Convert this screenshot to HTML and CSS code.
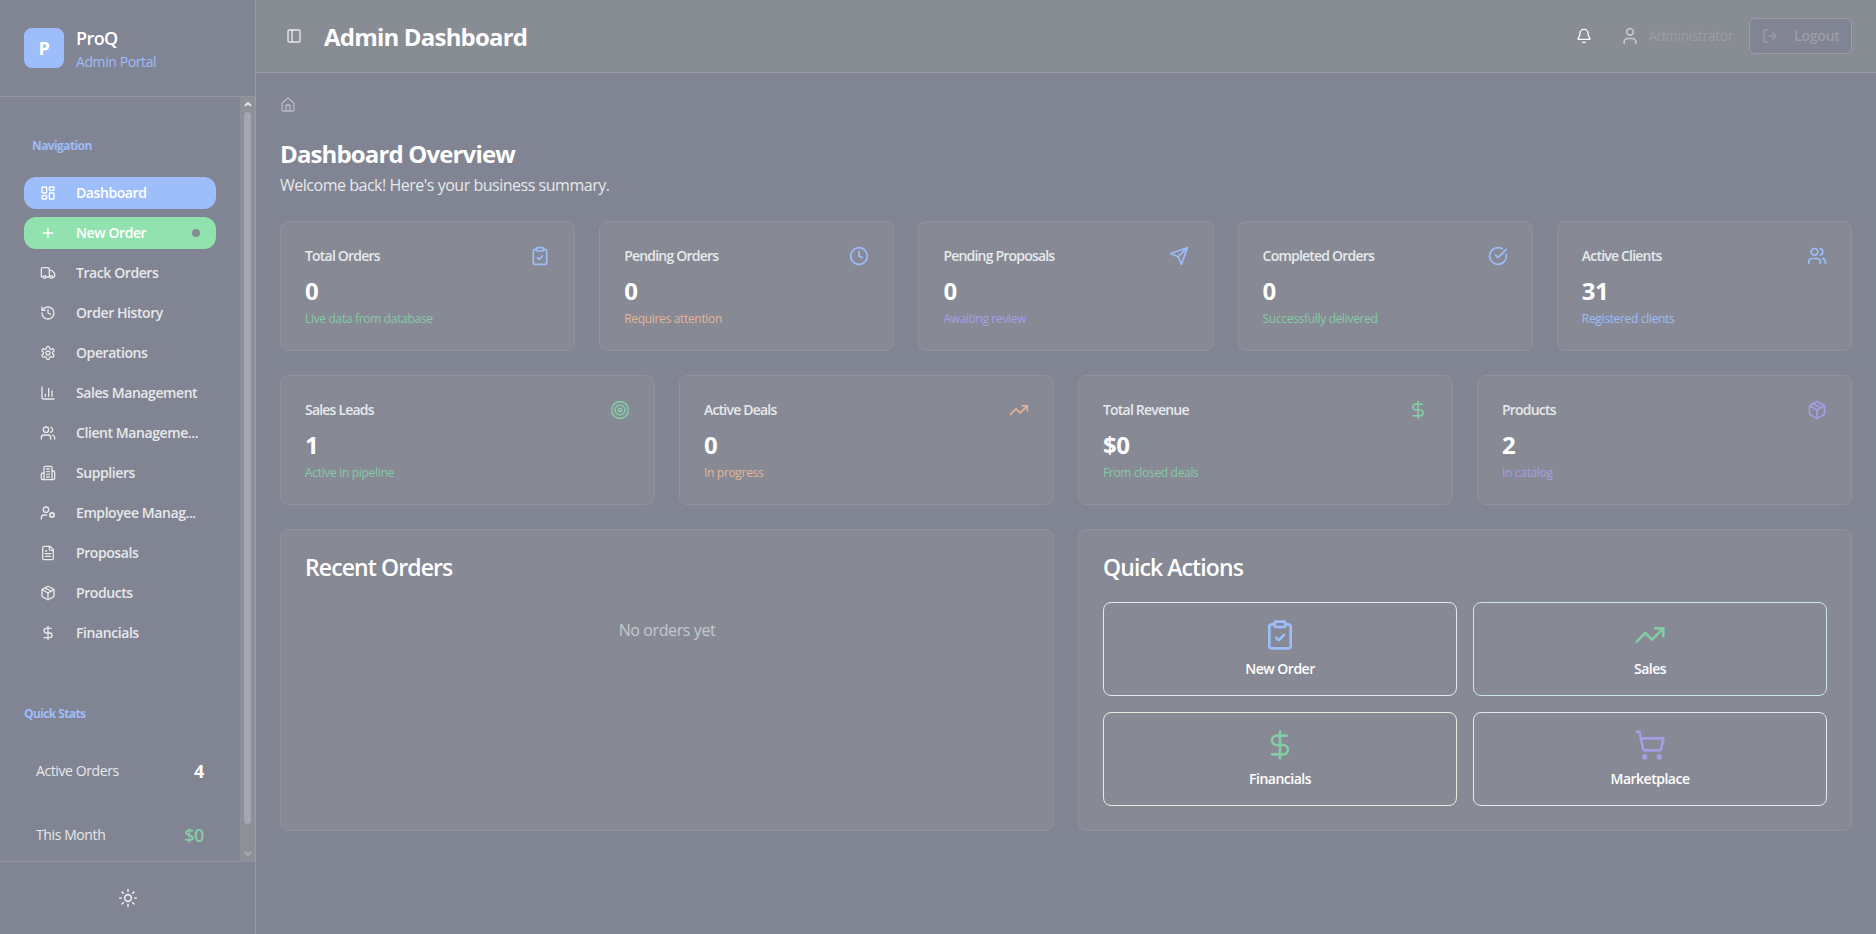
FILE: index.html
```html
<!DOCTYPE html>
<html lang="en">
<head>
  <meta charset="UTF-8">
  <meta name="viewport" content="width=device-width, initial-scale=1.0">
  <title>ProQ Admin Dashboard</title>
  <link rel="stylesheet" href="styles.css">
</head>
<body>
  <!-- shared icons -->
  <svg class="sprite" xmlns="http://www.w3.org/2000/svg">
    <symbol id="i-grid" viewBox="0 0 24 24"><rect x="3" y="3" width="7" height="9" rx="1"/><rect x="14" y="3" width="7" height="5" rx="1"/><rect x="14" y="12" width="7" height="9" rx="1"/><rect x="3" y="16" width="7" height="5" rx="1"/></symbol>
    <symbol id="i-plus" viewBox="0 0 24 24"><path d="M5 12h14M12 5v14"/></symbol>
    <symbol id="i-truck" viewBox="0 0 24 24"><path d="M14 18V6a2 2 0 0 0-2-2H4a2 2 0 0 0-2 2v11a1 1 0 0 0 1 1h2"/><path d="M15 18H9"/><path d="M19 18h2a1 1 0 0 0 1-1v-3.65a1 1 0 0 0-.22-.624l-3.48-4.35A1 1 0 0 0 17.52 8H14"/><circle cx="17" cy="18" r="2"/><circle cx="7" cy="18" r="2"/></symbol>
    <symbol id="i-history" viewBox="0 0 24 24"><path d="M3 12a9 9 0 1 0 9-9 9.75 9.75 0 0 0-6.74 2.74L3 8"/><path d="M3 3v5h5"/><path d="M12 7v5l4 2"/></symbol>
    <symbol id="i-settings" viewBox="0 0 24 24"><path d="M12.22 2h-.44a2 2 0 0 0-2 2v.18a2 2 0 0 1-1 1.73l-.43.25a2 2 0 0 1-2 0l-.15-.08a2 2 0 0 0-2.73.73l-.22.38a2 2 0 0 0 .73 2.73l.15.1a2 2 0 0 1 1 1.72v.51a2 2 0 0 1-1 1.74l-.15.09a2 2 0 0 0-.73 2.73l.22.38a2 2 0 0 0 2.73.73l.15-.08a2 2 0 0 1 2 0l.43.25a2 2 0 0 1 1 1.73V20a2 2 0 0 0 2 2h.44a2 2 0 0 0 2-2v-.18a2 2 0 0 1 1-1.73l.43-.25a2 2 0 0 1 2 0l.15.08a2 2 0 0 0 2.73-.73l.22-.39a2 2 0 0 0-.73-2.73l-.15-.08a2 2 0 0 1-1-1.74v-.5a2 2 0 0 1 1-1.74l.15-.09a2 2 0 0 0 .73-2.73l-.22-.38a2 2 0 0 0-2.73-.73l-.15.08a2 2 0 0 1-2 0l-.43-.25a2 2 0 0 1-1-1.73V4a2 2 0 0 0-2-2z"/><circle cx="12" cy="12" r="3"/></symbol>
    <symbol id="i-chart" viewBox="0 0 24 24"><path d="M3 3v16a2 2 0 0 0 2 2h16"/><path d="M18 17V9M13 17V5M8 17v-3"/></symbol>
    <symbol id="i-users" viewBox="0 0 24 24"><path d="M16 21v-2a4 4 0 0 0-4-4H6a4 4 0 0 0-4 4v2"/><circle cx="9" cy="7" r="4"/><path d="M22 21v-2a4 4 0 0 0-3-3.87"/><path d="M16 3.13a4 4 0 0 1 0 7.75"/></symbol>
    <symbol id="i-building" viewBox="0 0 24 24"><path d="M6 22V4a2 2 0 0 1 2-2h8a2 2 0 0 1 2 2v18Z"/><path d="M6 12H4a2 2 0 0 0-2 2v6a2 2 0 0 0 2 2h2"/><path d="M18 9h2a2 2 0 0 1 2 2v9a2 2 0 0 1-2 2h-2"/><path d="M10 6h4M10 10h4M10 14h4M10 18h4"/></symbol>
    <symbol id="i-usercog" viewBox="0 0 24 24"><path d="M10 15H6a4 4 0 0 0-4 4v2"/><circle cx="9" cy="7" r="4"/><circle cx="18" cy="15" r="3"/><path d="m14.305 16.53.923-.382M15.228 13.852l-.923-.383M16.852 12.228l-.383-.923M16.852 17.772l-.383.924M19.148 12.228l.383-.923M19.53 18.696l-.382-.924M20.772 13.852l.924-.383M20.772 16.148l.924.383"/></symbol>
    <symbol id="i-file" viewBox="0 0 24 24"><path d="M15 2H6a2 2 0 0 0-2 2v16a2 2 0 0 0 2 2h12a2 2 0 0 0 2-2V7Z"/><path d="M14 2v4a2 2 0 0 0 2 2h4"/><path d="M10 9H8M16 13H8M16 17H8"/></symbol>
    <symbol id="i-package" viewBox="0 0 24 24"><path d="M11 21.73a2 2 0 0 0 2 0l7-4A2 2 0 0 0 21 16V8a2 2 0 0 0-1-1.73l-7-4a2 2 0 0 0-2 0l-7 4A2 2 0 0 0 3 8v8a2 2 0 0 0 1 1.73z"/><path d="M12 22V12"/><path d="M3.3 7 12 12l8.7-5"/><path d="m7.5 4.27 9 5.15"/></symbol>
    <symbol id="i-dollar" viewBox="0 0 24 24"><path d="M12 2v20"/><path d="M17 5H9.500a3.500 3.500 0 0 0 0 7h5a3.500 3.500 0 0 1 0 7H6"/></symbol>
    <symbol id="i-sun" viewBox="0 0 24 24"><circle cx="12" cy="12" r="4"/><path d="M12 2v2M12 20v2M4.930 4.930l1.410 1.410M17.660 17.660l1.410 1.410M2 12h2M20 12h2M6.340 17.660l-1.410 1.410M19.070 4.930l-1.410 1.410"/></symbol>
    <symbol id="i-panel" viewBox="0 0 24 24"><rect x="3" y="3" width="18" height="18" rx="2"/><path d="M9 3v18"/></symbol>
    <symbol id="i-bell" viewBox="0 0 24 24"><path d="M10.268 21a2 2 0 0 0 3.464 0"/><path d="M3.262 15.326A1 1 0 0 0 4 17h16a1 1 0 0 0 .74-1.673C19.410 13.956 18 12.499 18 8A6 6 0 0 0 6 8c0 4.499-1.411 5.956-2.738 7.326"/></symbol>
    <symbol id="i-user" viewBox="0 0 24 24"><path d="M19 21v-2a4 4 0 0 0-4-4H9a4 4 0 0 0-4 4v2"/><circle cx="12" cy="7" r="4"/></symbol>
    <symbol id="i-logout" viewBox="0 0 24 24"><path d="m16 17 5-5-5-5M21 12H9M9 21H5a2 2 0 0 1-2-2V5a2 2 0 0 1 2-2h4"/></symbol>
    <symbol id="i-home" viewBox="0 0 24 24"><path d="M15 21v-8a1 1 0 0 0-1-1h-4a1 1 0 0 0-1 1v8"/><path d="M3 10a2 2 0 0 1 .709-1.528l7-6a2 2 0 0 1 2.582 0l7 6A2 2 0 0 1 21 10v9a2 2 0 0 1-2 2H5a2 2 0 0 1-2-2z"/></symbol>
    <symbol id="i-clipboard" viewBox="0 0 24 24"><rect x="8" y="2" width="8" height="4" rx="1"/><path d="M16 4h2a2 2 0 0 1 2 2v14a2 2 0 0 1-2 2H6a2 2 0 0 1-2-2V6a2 2 0 0 1 2-2h2"/><path d="m9 14 2 2 4-4"/></symbol>
    <symbol id="i-clock" viewBox="0 0 24 24"><circle cx="12" cy="12" r="10"/><path d="M12 6v6l4 2"/></symbol>
    <symbol id="i-send" viewBox="0 0 24 24"><path d="m22 2-7 20-4-9-9-4Z"/><path d="M22 2 11 13"/></symbol>
    <symbol id="i-check" viewBox="0 0 24 24"><path d="M21.801 10A10 10 0 1 1 17 3.335"/><path d="m9 11 3 3L22 4"/></symbol>
    <symbol id="i-target" viewBox="0 0 24 24"><circle cx="12" cy="12" r="10"/><circle cx="12" cy="12" r="6"/><circle cx="12" cy="12" r="2"/></symbol>
    <symbol id="i-trend" viewBox="0 0 24 24"><path d="m22 7-8.500 8.500-5-5L2 17"/><path d="M16 7h6v6"/></symbol>
    <symbol id="i-cart" viewBox="0 0 24 24"><circle cx="8" cy="21" r="1"/><circle cx="19" cy="21" r="1"/><path d="M2.050 2.050h2l2.660 12.420a2 2 0 0 0 2 1.580h9.780a2 2 0 0 0 1.950-1.570l1.650-7.430H5.120"/></symbol>
  </svg>

  <div class="layout">
    <aside class="sidebar">
      <div class="brand">
        <div class="logo">P</div>
        <div>
          <div class="brand-name">ProQ</div>
          <div class="brand-sub">Admin Portal</div>
        </div>
      </div>
      <div class="sidebar-body">
        <div class="sidebar-content">
          <div class="nav-label">Navigation</div>
          <nav class="nav">
            <a class="nav-item active"><svg class="icon"><use href="#i-grid"/></svg><span>Dashboard</span></a>
            <a class="nav-item new"><svg class="icon"><use href="#i-plus"/></svg><span>New Order</span><i class="dot"></i></a>
            <a class="nav-item"><svg class="icon"><use href="#i-truck"/></svg><span>Track Orders</span></a>
            <a class="nav-item"><svg class="icon"><use href="#i-history"/></svg><span>Order History</span></a>
            <a class="nav-item"><svg class="icon"><use href="#i-settings"/></svg><span>Operations</span></a>
            <a class="nav-item"><svg class="icon"><use href="#i-chart"/></svg><span>Sales Management</span></a>
            <a class="nav-item"><svg class="icon"><use href="#i-users"/></svg><span>Client Manageme...</span></a>
            <a class="nav-item"><svg class="icon"><use href="#i-building"/></svg><span>Suppliers</span></a>
            <a class="nav-item"><svg class="icon"><use href="#i-usercog"/></svg><span>Employee Manag...</span></a>
            <a class="nav-item"><svg class="icon"><use href="#i-file"/></svg><span>Proposals</span></a>
            <a class="nav-item"><svg class="icon"><use href="#i-package"/></svg><span>Products</span></a>
            <a class="nav-item"><svg class="icon"><use href="#i-dollar"/></svg><span>Financials</span></a>
          </nav>
          <div class="stats-label">Quick Stats</div>
          <div class="stat-row"><span>Active Orders</span><b>4</b></div>
          <div class="stat-row"><span>This Month</span><b class="money">$0</b></div>
        </div>
        <div class="scrollbar">
          <svg class="arrow" viewBox="0 0 8 6"><path d="M1 5l3-3 3 3"/></svg>
          <div class="thumb"></div>
          <svg class="arrow down" viewBox="0 0 8 6"><path d="M1 1l3 3 3-3"/></svg>
        </div>
      </div>
      <div class="sidebar-footer"><svg class="icon md"><use href="#i-sun"/></svg></div>
    </aside>

    <div class="main">
      <header class="topbar">
        <svg class="icon"><use href="#i-panel"/></svg>
        <h1>Admin Dashboard</h1>
        <div class="topbar-right">
          <svg class="icon bell"><use href="#i-bell"/></svg>
          <div class="account"><svg class="icon md"><use href="#i-user"/></svg><span>Administrator</span></div>
          <button class="logout"><svg class="icon"><use href="#i-logout"/></svg><span>Logout</span></button>
        </div>
      </header>

      <main class="content">
        <svg class="icon crumb"><use href="#i-home"/></svg>
        <h2>Dashboard Overview</h2>
        <p class="welcome">Welcome back! Here's your business summary.</p>

        <section class="cards five">
          <div class="card"><div class="card-head"><span>Total Orders</span><svg class="icon md blue"><use href="#i-clipboard"/></svg></div><div class="value">0</div><div class="note green">Live data from database</div></div>
          <div class="card"><div class="card-head"><span>Pending Orders</span><svg class="icon md blue"><use href="#i-clock"/></svg></div><div class="value">0</div><div class="note orange">Requires attention</div></div>
          <div class="card"><div class="card-head"><span>Pending Proposals</span><svg class="icon md blue"><use href="#i-send"/></svg></div><div class="value">0</div><div class="note purple">Awaiting review</div></div>
          <div class="card"><div class="card-head"><span>Completed Orders</span><svg class="icon md blue"><use href="#i-check"/></svg></div><div class="value">0</div><div class="note green">Successfully delivered</div></div>
          <div class="card"><div class="card-head"><span>Active Clients</span><svg class="icon md blue"><use href="#i-users"/></svg></div><div class="value">31</div><div class="note blue">Registered clients</div></div>
        </section>

        <section class="cards four">
          <div class="card"><div class="card-head"><span>Sales Leads</span><svg class="icon md green"><use href="#i-target"/></svg></div><div class="value">1</div><div class="note green">Active in pipeline</div></div>
          <div class="card"><div class="card-head"><span>Active Deals</span><svg class="icon md orange"><use href="#i-trend"/></svg></div><div class="value">0</div><div class="note orange">In progress</div></div>
          <div class="card"><div class="card-head"><span>Total Revenue</span><svg class="icon md green"><use href="#i-dollar"/></svg></div><div class="value">$0</div><div class="note green">From closed deals</div></div>
          <div class="card"><div class="card-head"><span>Products</span><svg class="icon md purple"><use href="#i-package"/></svg></div><div class="value">2</div><div class="note purple">In catalog</div></div>
        </section>

        <section class="cards two">
          <div class="card panel">
            <h3>Recent Orders</h3>
            <p class="empty">No orders yet</p>
          </div>
          <div class="card panel">
            <h3>Quick Actions</h3>
            <div class="actions">
              <button class="action"><svg class="icon lg blue"><use href="#i-clipboard"/></svg><span>New Order</span></button>
              <button class="action teal"><svg class="icon lg green"><use href="#i-trend"/></svg><span>Sales</span></button>
              <button class="action lime"><svg class="icon lg green"><use href="#i-dollar"/></svg><span>Financials</span></button>
              <button class="action"><svg class="icon lg purple"><use href="#i-cart"/></svg><span>Marketplace</span></button>
            </div>
          </div>
        </section>
      </main>
    </div>
  </div>
</body>
</html>
```

FILE: styles.css
```css
* {
  box-sizing: border-box;
}
body {
  margin: 0;
  font-family: 'Segoe UI', 'Open Sans', 'Noto Sans', sans-serif;
  font-size: 14px;
  line-height: 20px;
  letter-spacing: -0.4px;
  color: #e6e9ea;
  background-color: #818492;
}
h1, h2, h3, p {
  margin: 0;
}
button {
  font: inherit;
  letter-spacing: inherit;
  color: inherit;
  background: none;
}
.sprite {
  display: none;
}
.icon {
  width: 16px;
  height: 16px;
  flex-shrink: 0;
  fill: none;
  stroke: currentColor;
  stroke-width: 2;
  stroke-linecap: round;
  stroke-linejoin: round;
}
.icon.md {
  width: 20px;
  height: 20px;
}
.icon.lg {
  width: 32px;
  height: 32px;
}
.blue {
  color: #9dbcfa;
}
.green {
  color: #85cba4;
}
.orange {
  color: #e5b396;
}
.purple {
  color: #a99ce6;
}
.layout {
  display: flex;
  height: 934px;
}

/* sidebar */
.sidebar {
  width: 256px;
  flex-shrink: 0;
  display: flex;
  flex-direction: column;
  border-right: 1px solid #9a9da9;
}
.brand {
  height: 97px;
  display: flex;
  gap: 12px;
  padding: 28px 24px 0;
  border-bottom: 1px solid #93959e;
}
.logo {
  width: 40px;
  height: 40px;
  border-radius: 8px;
  background-color: #9dbefa;
  color: #fff;
  font-size: 18px;
  font-weight: 700;
  line-height: 40px;
  text-align: center;
}
.brand-name {
  font-size: 18px;
  font-weight: 600;
  line-height: 21px;
  color: #fff;
  letter-spacing: -0.6px;
}
.brand-sub {
  line-height: 26px;
  color: #9dbcfa;
}
.sidebar-body {
  flex: 1;
  display: flex;
  min-height: 0;
}
.sidebar-content {
  flex: 1;
  padding: 41px 24px 0;
  overflow: hidden;
}
.nav-label, .stats-label {
  font-size: 12px;
  font-weight: 700;
  line-height: 16px;
  color: #9dbcfa;
  letter-spacing: -0.6px;
}
.nav-label {
  padding-left: 8px;
  margin-bottom: 23px;
}
.nav {
  display: flex;
  flex-direction: column;
  gap: 8px;
}
.nav-item {
  height: 32px;
  display: flex;
  align-items: center;
  padding: 0 16px;
  border-radius: 12px;
  font-weight: 600;
  white-space: nowrap;
  letter-spacing: -0.42px;
}
.nav-item .icon {
  margin-right: 20px;
}
.nav-item.active {
  color: #fff;
  background-color: #9dbefa;
}
.nav-item.new {
  color: #fff;
  background-color: #92e2af;
}
.dot {
  width: 8px;
  height: 8px;
  margin-left: auto;
  border-radius: 50%;
  background-color: #868c93;
}
.stats-label {
  margin-top: 57px;
}
.stat-row {
  height: 64px;
  display: flex;
  align-items: center;
  justify-content: space-between;
  padding: 0 12px;
}
.stats-label + .stat-row {
  margin-top: 17px;
}
.stat-row b {
  font-size: 18px;
  font-weight: 700;
  color: #fff;
}
.stat-row .money {
  font-weight: 600;
  color: #85cba4;
}
.scrollbar {
  width: 15px;
  display: flex;
  flex-direction: column;
  align-items: center;
  padding: 4px 0;
  background-color: #8d9097;
}
.thumb {
  width: 7px;
  flex: 1;
  margin: 5px 0 27px;
  border-radius: 4px;
  background-color: #a3a6b3;
}
.arrow {
  width: 8px;
  height: 6px;
  fill: none;
  stroke: #e3e6e9;
  stroke-width: 2;
}
.arrow.down {
  stroke: #aaadb8;
}
.sidebar-footer {
  height: 73px;
  display: flex;
  align-items: center;
  justify-content: center;
  border-top: 1px solid #93959e;
}

/* main area */
.main {
  flex: 1;
  min-width: 0;
}
.topbar {
  height: 73px;
  display: flex;
  align-items: center;
  padding: 0 24px 0 30px;
  background-color: #888c93;
  border-bottom: 1px solid #9a9da9;
}
.topbar h1 {
  margin-left: 22px;
  padding-top: 2px;
  font-size: 24px;
  font-weight: 700;
  line-height: 32px;
  letter-spacing: -0.8px;
  color: #fff;
}
.topbar-right {
  display: flex;
  align-items: center;
  margin-left: auto;
}
.bell {
  color: #fff;
}
.account {
  display: flex;
  align-items: center;
  gap: 9px;
  margin: 0 16px 0 28px;
  color: #9b9ea8;
  letter-spacing: -0.45px;
}
.account .icon {
  color: #c5c8d1;
}
.logout {
  width: 103px;
  height: 36px;
  display: flex;
  align-items: center;
  gap: 16px;
  padding: 0 12px;
  border: 1px solid #9b9ea9;
  border-radius: 6px;
  background-color: #818492;
  color: #9b9ea8;
  font-weight: 600;
  letter-spacing: -0.2px;
}
.content {
  padding: 24px;
}
.crumb {
  display: block;
  color: #b9bcc5;
}
.content h2 {
  margin-top: 25px;
  font-size: 24px;
  font-weight: 700;
  line-height: 32px;
  letter-spacing: -0.86px;
  color: #fff;
}
.welcome {
  margin-bottom: 24px;
  padding-top: 3px;
  font-size: 16px;
  line-height: 24px;
  letter-spacing: -0.48px;
}
.cards {
  display: grid;
  gap: 24px;
  margin-bottom: 24px;
}
.five {
  grid-template-columns: repeat(5, 1fr);
}
.four {
  grid-template-columns: repeat(4, 1fr);
}
.two {
  grid-template-columns: repeat(2, 1fr);
}
.card {
  height: 130px;
  padding: 24px;
  border: 1px solid #8f929b;
  border-radius: 8px;
  background-color: #878a95;
}
.card-head {
  display: flex;
  align-items: center;
  justify-content: space-between;
  margin-bottom: 9px;
  font-weight: 600;
  letter-spacing: -0.8px;
}
.value {
  margin-bottom: 4px;
  font-size: 24px;
  font-weight: 700;
  line-height: 32px;
  color: #fff;
}
.note {
  font-size: 12px;
  line-height: 16px;
  letter-spacing: -0.32px;
}
.panel {
  height: 302px;
}
.panel h3 {
  padding-top: 1px;
  font-size: 23px;
  font-weight: 600;
  line-height: 24px;
  letter-spacing: -0.9px;
  color: #fff;
}
.empty {
  margin-top: 39px;
  font-size: 16px;
  line-height: 24px;
  text-align: center;
  color: #c5c8d0;
}
.actions {
  display: grid;
  grid-template-columns: repeat(2, 1fr);
  gap: 16px;
  margin-top: 23px;
}
.action {
  height: 94px;
  display: flex;
  flex-direction: column;
  align-items: center;
  gap: 8px;
  padding: 16px;
  border: 1px solid #e3e8f4;
  border-radius: 8px;
  color: #fff;
  font-weight: 600;
  letter-spacing: -0.5px;
}
.action.teal {
  border-color: #cbe6ea;
}
.action.lime {
  border-color: #e5ecdf;
}
```
